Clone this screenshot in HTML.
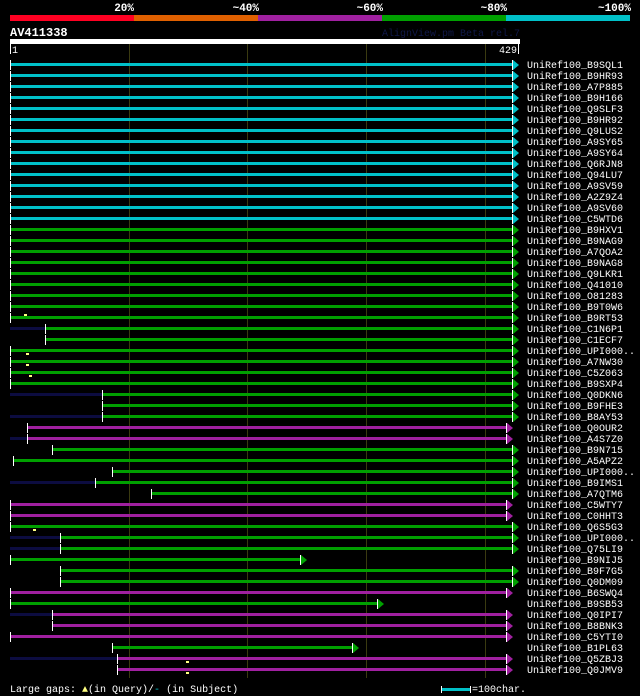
<!DOCTYPE html>
<html><head><meta charset="utf-8"><style>
html,body{margin:0;padding:0;background:#000;width:640px;height:696px;overflow:hidden}
svg{display:block}
text{font-family:"Liberation Mono","DejaVu Sans Mono",monospace;fill:#fff}
.c{fill:#00c0c8}.g{fill:#00a000}.m{fill:#a020a0}.n{fill:#0c0c40}.w{fill:#fff}
</style></head><body>
<svg width="640" height="696" viewBox="0 0 640 696" xmlns="http://www.w3.org/2000/svg">
<defs>
<g id="ac"><rect x="0" y="-4" width="1" height="10" class="w"/><polygon points="1,-4 7,1 1,6" class="c"/></g>
<g id="ag"><rect x="0" y="-4" width="1" height="10" class="w"/><polygon points="1,-4 7,1 1,6" class="g"/></g>
<g id="am"><rect x="0" y="-4" width="1" height="10" class="w"/><polygon points="1,-4 7,1 1,6" class="m"/></g>
<rect id="t" x="0" y="-4" width="1" height="10" class="w"/>
</defs>
<g font-size="11" font-weight="bold" text-anchor="end">
<text x="134" y="11">20%</text><text x="259" y="11">~40%</text><text x="383" y="11">~60%</text><text x="507" y="11">~80%</text><text x="631" y="11">~100%</text>
</g>
<rect x="10" y="15" width="124" height="6" fill="#ff0022"/>
<rect x="134" y="15" width="124" height="6" fill="#e06000"/>
<rect x="258" y="15" width="124" height="6" fill="#a020a0"/>
<rect x="382" y="15" width="124" height="6" fill="#00a000"/>
<rect x="506" y="15" width="124" height="6" fill="#00c0c8"/>
<text x="10" y="36" font-size="12" font-weight="bold">AV411338</text>
<text x="520" y="36" font-size="10" text-anchor="end" style="fill:#101848">AlignView.pm Beta rel.7</text>
<rect x="10" y="39" width="510" height="5" fill="#fff"/>
<g stroke="#3a3a10" stroke-width="1"><line x1="129.5" y1="44" x2="129.5" y2="678"/><line x1="247.5" y1="44" x2="247.5" y2="678"/><line x1="366.5" y1="44" x2="366.5" y2="678"/><line x1="485.5" y1="44" x2="485.5" y2="678"/></g>
<rect x="10" y="44" width="1" height="10" fill="#fff"/><text x="12" y="53" font-size="10">1</text>
<text x="517" y="53" font-size="10" text-anchor="end">429</text><rect x="518" y="44" width="1" height="10" fill="#fff"/>

<g transform="translate(0,64)"><rect x="10" y="-1" width="502" height="3" class="c"/><use href="#t" x="10"/><use href="#ac" x="512"/></g>
<g transform="translate(0,75)"><rect x="10" y="-1" width="502" height="3" class="c"/><use href="#t" x="10"/><use href="#ac" x="512"/></g>
<g transform="translate(0,86)"><rect x="10" y="-1" width="502" height="3" class="c"/><use href="#t" x="10"/><use href="#ac" x="512"/></g>
<g transform="translate(0,97)"><rect x="10" y="-1" width="502" height="3" class="c"/><use href="#t" x="10"/><use href="#ac" x="512"/></g>
<g transform="translate(0,108)"><rect x="10" y="-1" width="502" height="3" class="c"/><use href="#t" x="10"/><use href="#ac" x="512"/></g>
<g transform="translate(0,119)"><rect x="10" y="-1" width="502" height="3" class="c"/><use href="#t" x="10"/><use href="#ac" x="512"/></g>
<g transform="translate(0,130)"><rect x="10" y="-1" width="502" height="3" class="c"/><use href="#t" x="10"/><use href="#ac" x="512"/></g>
<g transform="translate(0,141)"><rect x="10" y="-1" width="502" height="3" class="c"/><use href="#t" x="10"/><use href="#ac" x="512"/></g>
<g transform="translate(0,152)"><rect x="10" y="-1" width="502" height="3" class="c"/><use href="#t" x="10"/><use href="#ac" x="512"/></g>
<g transform="translate(0,163)"><rect x="10" y="-1" width="502" height="3" class="c"/><use href="#t" x="10"/><use href="#ac" x="512"/></g>
<g transform="translate(0,174)"><rect x="10" y="-1" width="502" height="3" class="c"/><use href="#t" x="10"/><use href="#ac" x="512"/></g>
<g transform="translate(0,185)"><rect x="10" y="-1" width="502" height="3" class="c"/><use href="#t" x="10"/><use href="#ac" x="512"/></g>
<g transform="translate(0,196)"><rect x="10" y="-1" width="502" height="3" class="c"/><use href="#t" x="10"/><use href="#ac" x="512"/></g>
<g transform="translate(0,207)"><rect x="10" y="-1" width="502" height="3" class="c"/><use href="#t" x="10"/><use href="#ac" x="512"/></g>
<g transform="translate(0,218)"><rect x="10" y="-1" width="502" height="3" class="c"/><use href="#t" x="10"/><use href="#ac" x="512"/></g>
<g transform="translate(0,229)"><rect x="10" y="-1" width="502" height="3" class="g"/><use href="#t" x="10"/><use href="#ag" x="512"/></g>
<g transform="translate(0,240)"><rect x="10" y="-1" width="502" height="3" class="g"/><use href="#t" x="10"/><use href="#ag" x="512"/></g>
<g transform="translate(0,251)"><rect x="10" y="-1" width="502" height="3" class="g"/><use href="#t" x="10"/><use href="#ag" x="512"/></g>
<g transform="translate(0,262)"><rect x="10" y="-1" width="502" height="3" class="g"/><use href="#t" x="10"/><use href="#ag" x="512"/></g>
<g transform="translate(0,273)"><rect x="10" y="-1" width="502" height="3" class="g"/><use href="#t" x="10"/><use href="#ag" x="512"/></g>
<g transform="translate(0,284)"><rect x="10" y="-1" width="502" height="3" class="g"/><use href="#t" x="10"/><use href="#ag" x="512"/></g>
<g transform="translate(0,295)"><rect x="10" y="-1" width="502" height="3" class="g"/><use href="#t" x="10"/><use href="#ag" x="512"/></g>
<g transform="translate(0,306)"><rect x="10" y="-1" width="502" height="3" class="g"/><use href="#t" x="10"/><use href="#ag" x="512"/></g>
<g transform="translate(0,317)"><rect x="10" y="-1" width="502" height="3" class="g"/><use href="#t" x="10"/><use href="#ag" x="512"/><rect x="24" y="-3" width="3" height="2" fill="#ffff80"/></g>
<g transform="translate(0,328)"><rect x="10" y="-1" width="35" height="3" class="n"/><rect x="45" y="-1" width="467" height="3" class="g"/><use href="#t" x="45"/><use href="#ag" x="512"/></g>
<g transform="translate(0,339)"><rect x="45" y="-1" width="467" height="3" class="g"/><use href="#t" x="45"/><use href="#ag" x="512"/></g>
<g transform="translate(0,350)"><rect x="10" y="-1" width="502" height="3" class="g"/><use href="#t" x="10"/><use href="#ag" x="512"/><rect x="26" y="3" width="3" height="2" fill="#ffff80"/></g>
<g transform="translate(0,361)"><rect x="10" y="-1" width="502" height="3" class="g"/><use href="#t" x="10"/><use href="#ag" x="512"/><rect x="26" y="3" width="3" height="2" fill="#ffff80"/></g>
<g transform="translate(0,372)"><rect x="10" y="-1" width="502" height="3" class="g"/><use href="#t" x="10"/><use href="#ag" x="512"/><rect x="29" y="3" width="3" height="2" fill="#ffff80"/></g>
<g transform="translate(0,383)"><rect x="10" y="-1" width="502" height="3" class="g"/><use href="#t" x="10"/><use href="#ag" x="512"/></g>
<g transform="translate(0,394)"><rect x="10" y="-1" width="92" height="3" class="n"/><rect x="102" y="-1" width="410" height="3" class="g"/><use href="#t" x="102"/><use href="#ag" x="512"/></g>
<g transform="translate(0,405)"><rect x="102" y="-1" width="410" height="3" class="g"/><use href="#t" x="102"/><use href="#ag" x="512"/></g>
<g transform="translate(0,416)"><rect x="10" y="-1" width="92" height="3" class="n"/><rect x="102" y="-1" width="410" height="3" class="g"/><use href="#t" x="102"/><use href="#ag" x="512"/></g>
<g transform="translate(0,427)"><rect x="27" y="-1" width="479" height="3" class="m"/><use href="#t" x="27"/><use href="#am" x="506"/></g>
<g transform="translate(0,438)"><rect x="10" y="-1" width="17" height="3" class="n"/><rect x="27" y="-1" width="479" height="3" class="m"/><use href="#t" x="27"/><use href="#am" x="506"/></g>
<g transform="translate(0,449)"><rect x="52" y="-1" width="460" height="3" class="g"/><use href="#t" x="52"/><use href="#ag" x="512"/></g>
<g transform="translate(0,460)"><rect x="13" y="-1" width="499" height="3" class="g"/><use href="#t" x="13"/><use href="#ag" x="512"/></g>
<g transform="translate(0,471)"><rect x="112" y="-1" width="400" height="3" class="g"/><use href="#t" x="112"/><use href="#ag" x="512"/></g>
<g transform="translate(0,482)"><rect x="10" y="-1" width="85" height="3" class="n"/><rect x="95" y="-1" width="417" height="3" class="g"/><use href="#t" x="95"/><use href="#ag" x="512"/></g>
<g transform="translate(0,493)"><rect x="151" y="-1" width="361" height="3" class="g"/><use href="#t" x="151"/><use href="#ag" x="512"/></g>
<g transform="translate(0,504)"><rect x="10" y="-1" width="496" height="3" class="m"/><use href="#t" x="10"/><use href="#am" x="506"/></g>
<g transform="translate(0,515)"><rect x="10" y="-1" width="496" height="3" class="m"/><use href="#t" x="10"/><use href="#am" x="506"/></g>
<g transform="translate(0,526)"><rect x="10" y="-1" width="502" height="3" class="g"/><use href="#t" x="10"/><use href="#ag" x="512"/><rect x="33" y="3" width="3" height="2" fill="#ffff80"/></g>
<g transform="translate(0,537)"><rect x="10" y="-1" width="50" height="3" class="n"/><rect x="60" y="-1" width="452" height="3" class="g"/><use href="#t" x="60"/><use href="#ag" x="512"/></g>
<g transform="translate(0,548)"><rect x="10" y="-1" width="50" height="3" class="n"/><rect x="60" y="-1" width="452" height="3" class="g"/><use href="#t" x="60"/><use href="#ag" x="512"/></g>
<g transform="translate(0,559)"><rect x="10" y="-1" width="290" height="3" class="g"/><use href="#t" x="10"/><use href="#ag" x="300"/></g>
<g transform="translate(0,570)"><rect x="60" y="-1" width="452" height="3" class="g"/><use href="#t" x="60"/><use href="#ag" x="512"/></g>
<g transform="translate(0,581)"><rect x="60" y="-1" width="452" height="3" class="g"/><use href="#t" x="60"/><use href="#ag" x="512"/></g>
<g transform="translate(0,592)"><rect x="10" y="-1" width="496" height="3" class="m"/><use href="#t" x="10"/><use href="#am" x="506"/></g>
<g transform="translate(0,603)"><rect x="10" y="-1" width="367" height="3" class="g"/><use href="#t" x="10"/><use href="#ag" x="377"/></g>
<g transform="translate(0,614)"><rect x="10" y="-1" width="42" height="3" class="n"/><rect x="52" y="-1" width="454" height="3" class="m"/><use href="#t" x="52"/><use href="#am" x="506"/></g>
<g transform="translate(0,625)"><rect x="52" y="-1" width="454" height="3" class="m"/><use href="#t" x="52"/><use href="#am" x="506"/></g>
<g transform="translate(0,636)"><rect x="10" y="-1" width="496" height="3" class="m"/><use href="#t" x="10"/><use href="#am" x="506"/></g>
<g transform="translate(0,647)"><rect x="112" y="-1" width="240" height="3" class="g"/><use href="#t" x="112"/><use href="#ag" x="352"/></g>
<g transform="translate(0,658)"><rect x="10" y="-1" width="107" height="3" class="n"/><rect x="117" y="-1" width="389" height="3" class="m"/><use href="#t" x="117"/><use href="#am" x="506"/><rect x="186" y="3" width="3" height="2" fill="#ffff80"/></g>
<g transform="translate(0,669)"><rect x="117" y="-1" width="389" height="3" class="m"/><use href="#t" x="117"/><use href="#am" x="506"/><rect x="186" y="3" width="3" height="2" fill="#ffff80"/></g>

<g font-size="10">
<text x="527" y="68">UniRef100_B9SQL1</text><text x="527" y="79">UniRef100_B9HR93</text><text x="527" y="90">UniRef100_A7P885</text><text x="527" y="101">UniRef100_B9H166</text><text x="527" y="112">UniRef100_Q9SLF3</text><text x="527" y="123">UniRef100_B9HR92</text><text x="527" y="134">UniRef100_Q9LUS2</text><text x="527" y="145">UniRef100_A9SY65</text><text x="527" y="156">UniRef100_A9SY64</text><text x="527" y="167">UniRef100_Q6RJN8</text><text x="527" y="178">UniRef100_Q94LU7</text><text x="527" y="189">UniRef100_A9SV59</text><text x="527" y="200">UniRef100_A2Z9Z4</text><text x="527" y="211">UniRef100_A9SV60</text><text x="527" y="222">UniRef100_C5WTD6</text><text x="527" y="233">UniRef100_B9HXV1</text><text x="527" y="244">UniRef100_B9NAG9</text><text x="527" y="255">UniRef100_A7QOA2</text><text x="527" y="266">UniRef100_B9NAG8</text><text x="527" y="277">UniRef100_Q9LKR1</text><text x="527" y="288">UniRef100_Q41010</text><text x="527" y="299">UniRef100_O81283</text><text x="527" y="310">UniRef100_B9T0W6</text><text x="527" y="321">UniRef100_B9RT53</text><text x="527" y="332">UniRef100_C1N6P1</text><text x="527" y="343">UniRef100_C1ECF7</text><text x="527" y="354">UniRef100_UPI000..</text><text x="527" y="365">UniRef100_A7NW30</text><text x="527" y="376">UniRef100_C5Z063</text><text x="527" y="387">UniRef100_B9SXP4</text><text x="527" y="398">UniRef100_Q0DKN6</text><text x="527" y="409">UniRef100_B9FHE3</text><text x="527" y="420">UniRef100_B8AY53</text><text x="527" y="431">UniRef100_Q0OUR2</text><text x="527" y="442">UniRef100_A4S7Z0</text><text x="527" y="453">UniRef100_B9N715</text><text x="527" y="464">UniRef100_A5APZ2</text><text x="527" y="475">UniRef100_UPI000..</text><text x="527" y="486">UniRef100_B9IMS1</text><text x="527" y="497">UniRef100_A7QTM6</text><text x="527" y="508">UniRef100_C5WTY7</text><text x="527" y="519">UniRef100_C0HHT3</text><text x="527" y="530">UniRef100_Q6S5G3</text><text x="527" y="541">UniRef100_UPI000..</text><text x="527" y="552">UniRef100_Q75LI9</text><text x="527" y="563">UniRef100_B9NIJ5</text><text x="527" y="574">UniRef100_B9F7G5</text><text x="527" y="585">UniRef100_Q0DM09</text><text x="527" y="596">UniRef100_B6SWQ4</text><text x="527" y="607">UniRef100_B9SB53</text><text x="527" y="618">UniRef100_Q0IPI7</text><text x="527" y="629">UniRef100_B8BNK3</text><text x="527" y="640">UniRef100_C5YTI0</text><text x="527" y="651">UniRef100_B1PL63</text><text x="527" y="662">UniRef100_Q5ZBJ3</text><text x="527" y="673">UniRef100_Q0JMV9</text>
</g>
<text x="10" y="692" font-size="10">Large gaps: <tspan style="fill:#ffff80">▲</tspan>(in Query)/<tspan style="fill:#00c0c8">-</tspan> (in Subject)</text>
<rect x="441" y="686" width="1" height="7" fill="#fff"/><rect x="442" y="688" width="28" height="3" fill="#00c0c8"/><rect x="470" y="686" width="1" height="7" fill="#fff"/>
<text x="472" y="692" font-size="10">=100char.</text>
</svg>
</body></html>
